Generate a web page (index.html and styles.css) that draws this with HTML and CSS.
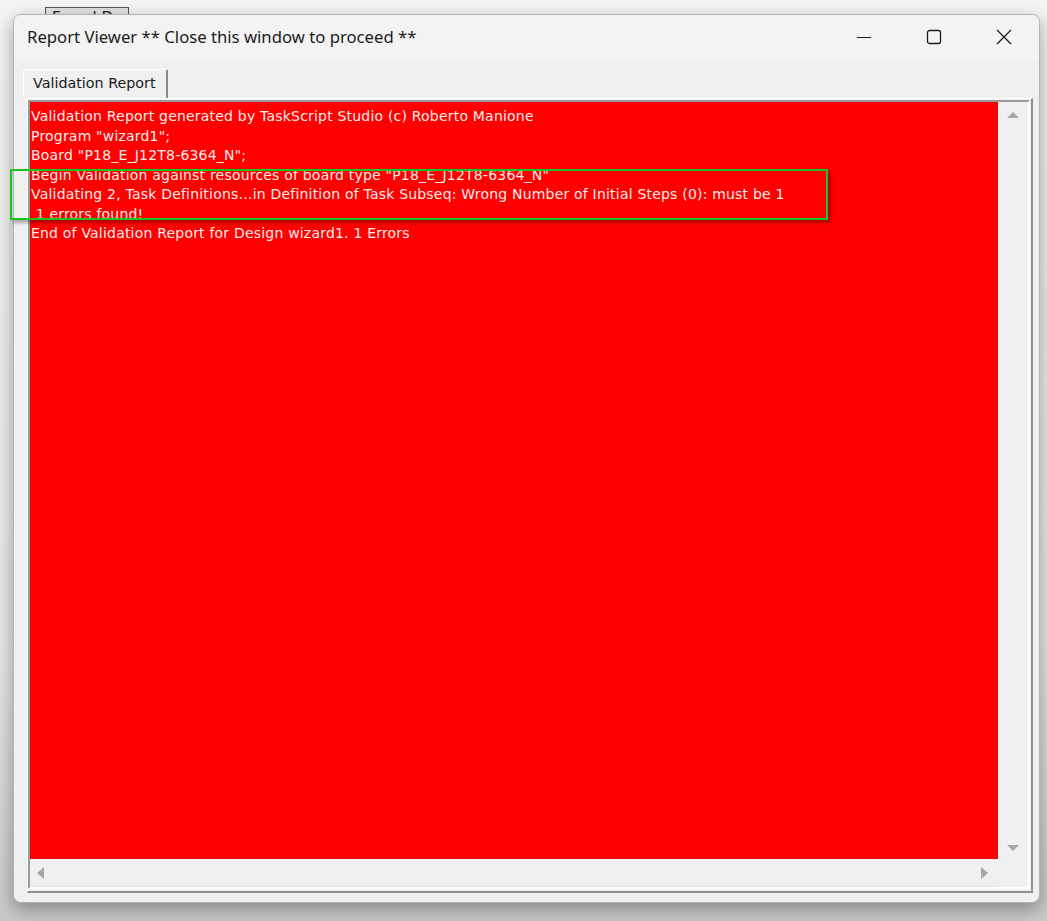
FILE: index.html
```html
<!DOCTYPE html>
<html lang="en">
<head>
    <meta charset="UTF-8">
    <title>Report Viewer</title>
    <link rel="stylesheet" href="styles.css">
</head>
<body>
    <div class="desk">
        <div class="behind">Forcel D</div>

        <div class="window">
            <div class="titlebar">
                <div class="title">Report Viewer ** Close this window to proceed **</div>
                <div class="caption">
                    <div class="cap-btn">
                        <svg width="16" height="16" viewBox="0 0 16 16"><path d="M1 8.5h14" stroke="#1a1a1a" stroke-width="1.2"/></svg>
                    </div>
                    <div class="cap-btn">
                        <svg width="16" height="16" viewBox="0 0 16 16"><rect x="1.5" y="1.5" width="13" height="13" rx="2" fill="none" stroke="#1a1a1a" stroke-width="1.3"/></svg>
                    </div>
                    <div class="cap-btn">
                        <svg width="16" height="16" viewBox="0 0 16 16"><path d="M1 1L15 15M15 1L1 15" stroke="#1a1a1a" stroke-width="1.3"/></svg>
                    </div>
                </div>
            </div>

            <div class="client">
                <div class="tabs">
                    <div class="tab">Validation Report</div>
                </div>
                <div class="page">
                    <div class="edit">
                        <div class="edit-row">
                            <div class="report">
                                <div>Validation Report generated by TaskScript Studio (c) Roberto Manione</div>
                                <div>Program "wizard1";</div>
                                <div>Board "P18_E_J12T8-6364_N";</div>
                                <div>Begin Validation against resources of board type "P18_E_J12T8-6364_N"</div>
                                <div>Validating 2, Task Definitions…in Definition of Task Subseq: Wrong Number of Initial Steps (0): must be 1</div>
                                <div>&nbsp;1 errors found!</div>
                                <div>End of Validation Report for Design wizard1. 1 Errors</div>
                            </div>
                            <div class="vscroll">
                                <span class="arrow up"></span>
                                <span class="arrow down"></span>
                            </div>
                        </div>
                        <div class="hscroll">
                            <div class="hbar">
                                <span class="arrow left"></span>
                                <span class="arrow right"></span>
                            </div>
                            <div class="corner"></div>
                        </div>
                    </div>
                </div>
            </div>
        </div>

        <!-- annotation box over the report -->
        <div class="highlight"></div>
    </div>
</body>
</html>
```

FILE: styles.css
```css
html, body {
    margin: 0;
    padding: 0;
    height: 100%;
    overflow: hidden;
    background: #ebebeb;
    font-family: "Noto Sans", "Open Sans", sans-serif;
}
.desk {
    position: relative;
    width: 1047px;
    height: 921px;
    padding: 14px 0 0 13px;
    box-sizing: border-box;
    background: linear-gradient(#f4f4f4, #e6e6e6 70%, #c8c8c8);
}
.behind {
    position: absolute;
    left: 45px;
    top: 7px;
    width: 84px;
    height: 8px;
    box-sizing: border-box;
    overflow: hidden;
    border: 1px solid #555;
    border-bottom: none;
    background: #e1e1e1;
    padding: 1px 0 0 6px;
    font-family: "DejaVu Sans", sans-serif;
    font-size: 15px;
    line-height: 18px;
    color: #222;
}

.window {
    position: relative;
    width: 1027px;
    height: 889px;
    box-sizing: border-box;
    border: 1px solid #b4b4b4;
    border-radius: 8px;
    background: #f0f0f0;
    box-shadow: 0 6px 18px rgba(0,0,0,0.35);
    overflow: hidden;
    display: flex;
    flex-direction: column;
}
.titlebar {
    height: 45px;
    display: flex;
    align-items: center;
    background: #f3f3f3;
}
.title {
    flex: 1;
    padding-left: 13px;
    padding-bottom: 2px;
    font-size: 16.7px;
    color: #1b1b1b;
}
.caption {
    display: flex;
    height: 100%;
}
.cap-btn {
    width: 70px;
    display: flex;
    align-items: center;
    justify-content: center;
    padding-bottom: 2px;
}

.client {
    flex: 1;
    display: flex;
    flex-direction: column;
    padding: 9px 6px 9px 9px;
}
.tabs {
    display: flex;
    height: 29px;
}
.tab {
    width: 145px;
    box-sizing: border-box;
    border-top: 1px solid #fff;
    border-left: 1px solid #fff;
    border-right: 2px solid #8a8a8a;
    border-radius: 2px 2px 0 0;
    padding: 5px 0 0 9px;
    font-family: "DejaVu Sans", sans-serif;
    font-size: 14.3px;
    color: #1a1a1a;
    background: #f0f0f0;
}
.page {
    flex: 1;
    display: flex;
    margin-left: 4px;
    border-top: 1px solid #fff;
    border-left: 1px solid #fff;
    border-right: 2px solid #8f8f8f;
    border-bottom: 2px solid #8f8f8f;
    padding: 1px 1px 2px 0;
}
.edit {
    flex: 1;
    display: flex;
    flex-direction: column;
    border-top: 2px solid #9a9a9a;
    border-left: 2px solid #9a9a9a;
    border-right: 2px solid #fdfdfd;
    border-bottom: 2px solid #fdfdfd;
}
.edit-row {
    flex: 1;
    display: flex;
}
.report {
    flex: 1;
    background: #ff0000;
    color: #ffecec;
    font-family: "DejaVu Sans", sans-serif;
    font-size: 14px;
    letter-spacing: 0.2px;
    line-height: 19.5px;
    padding: 5px 0 0 1px;
    white-space: nowrap;
    overflow: hidden;
}
.vscroll {
    width: 30px;
    background: #f0f0f0;
    display: flex;
    flex-direction: column;
    justify-content: space-between;
    align-items: center;
    padding: 10px 0 8px;
}
.hscroll {
    height: 28px;
    display: flex;
}
.hbar {
    flex: 1;
    display: flex;
    justify-content: space-between;
    align-items: center;
    padding: 0 10px 0 7px;
    background: #f0f0f0;
    border-bottom: 1px solid #e4e4e4;
}
.corner {
    width: 30px;
    background: #f0f0f0;
}
.arrow {
    width: 0;
    height: 0;
    border: 0 solid transparent;
}
.arrow.up {
    border-width: 0 6px 6px;
    border-bottom-color: #a6a6a6;
}
.arrow.down {
    border-width: 6px 6px 0;
    border-top-color: #a6a6a6;
}
.arrow.left {
    border-width: 6px 7px 6px 0;
    border-right-color: #a6a6a6;
}
.arrow.right {
    border-width: 6px 0 6px 7px;
    border-left-color: #a6a6a6;
}

.highlight {
    position: absolute;
    left: 10px;
    top: 169px;
    width: 818px;
    height: 51px;
    box-sizing: border-box;
    border: 2px solid #1dc41d;
    box-shadow: 3px 3px 3px rgba(0,0,0,0.3);
}
```
